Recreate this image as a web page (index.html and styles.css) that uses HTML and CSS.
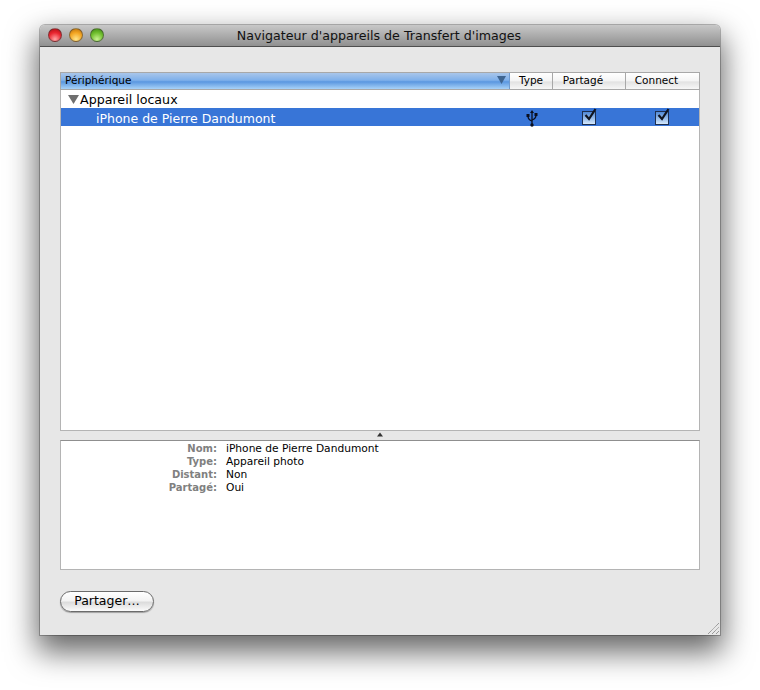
FILE: index.html
```html
<!DOCTYPE html>
<html lang="fr">
<head>
<meta charset="utf-8">
<title>Navigateur d'appareils de Transfert d'images</title>
<link rel="stylesheet" href="styles.css">
</head>
<body>
<div class="window">
  <header class="titlebar">
    <div class="lights">
      <span class="light red"></span>
      <span class="light yellow"></span>
      <span class="light green"></span>
    </div>
    <div class="title">Navigateur d'appareils de Transfert d'images</div>
  </header>
  <main class="content">
    <section class="table">
      <div class="thead">
        <div class="th th-device">
          <span>Périphérique</span>
          <svg class="sort" width="9" height="8" viewBox="0 0 9 8"><path d="M0 0h9L4.500 8z" fill="#3f6590"/></svg>
        </div>
        <div class="th col-type">Type</div>
        <div class="th col-shared">Partagé</div>
        <div class="th col-connect">Connect</div>
      </div>
      <div class="row group">
        <svg class="disclosure" width="11" height="9" viewBox="0 0 11 9"><path d="M0 0h11L5.500 9z" fill="#6f6f6f"/></svg>
        <span>Appareil locaux</span>
      </div>
      <div class="row selected">
        <span class="name">iPhone de Pierre Dandumont</span>
        <div class="cell col-type">
          <svg width="14" height="17" viewBox="0 0 14 17"><g fill="none" stroke="#0a0f1e" stroke-width="1.300"><path d="M7 2v13"/><path d="M7 11C3.500 10 3 8.500 3 6"/><path d="M7 10c3-1 4-2 4-5"/></g><path d="M7 0l2 3H5zM1.500 4h3v3h-3zM9.500 3h3v3h-3z" fill="#0a0f1e"/><circle cx="7" cy="15" r="1.700" fill="#0a0f1e"/></svg>
        </div>
        <div class="cell col-shared"><span class="check"><svg width="16" height="16" viewBox="0 0 16 16"><path d="M3.500 7l3.500 4L13.500 1" fill="none" stroke="#10141f" stroke-width="2.200"/></svg></span></div>
        <div class="cell col-connect"><span class="check"><svg width="16" height="16" viewBox="0 0 16 16"><path d="M3.500 7l3.500 4L13.500 1" fill="none" stroke="#10141f" stroke-width="2.200"/></svg></span></div>
      </div>
    </section>
    <div class="splitter"><svg width="6" height="5" viewBox="0 0 6 5"><path d="M0 4.500L3 .5 6 4.500z" fill="#333"/></svg></div>
    <section class="info">
      <div class="k">Nom:</div><div>iPhone de Pierre Dandumont</div>
      <div class="k">Type:</div><div>Appareil photo</div>
      <div class="k">Distant:</div><div>Non</div>
      <div class="k">Partagé:</div><div>Oui</div>
    </section>
    <div class="actions"><button class="btn" type="button">Partager…</button></div>
    <svg class="grip" width="12" height="12" viewBox="0 0 12 12"><path d="M1 12L12 1M5 12l7-7M9 12l3-3" stroke="#7a7a7a" stroke-width="1" stroke-dasharray="1 .6" fill="none"/></svg>
  </main>
</div>
</body>
</html>
```
FILE: styles.css
```css
* { box-sizing: border-box; }
html, body { margin: 0; height: 100%; background: #fff; }
body {
  width: 760px;
  height: 690px;
  padding: 25px 40px 55px 40px;
  overflow: hidden;
  font-family: "DejaVu Sans", sans-serif;
  color: #000;
}
.window {
  position: relative;
  width: 680px;
  height: 610px;
  display: flex;
  flex-direction: column;
  border-radius: 5px 5px 0 0;
  background: #e7e7e7;
  box-shadow: 0 14px 30px 3px rgba(0,0,0,.6), 0 0 0 1px rgba(0,0,0,.25);
}
.titlebar {
  position: relative;
  height: 22px;
  flex: none;
  border-radius: 5px 5px 0 0;
  background: linear-gradient(#c8c8c8, #909090);
  border-bottom: 1px solid #4e4e4e;
  display: flex;
  align-items: center;
  justify-content: center;
}
.lights { position: absolute; left: 8px; top: 3px; display: flex; gap: 7px; }
.light { width: 14px; height: 14px; border-radius: 50%; border: 1px solid rgba(60,60,60,.55); }
.red { background: radial-gradient(circle at 50% 85%, #ffa6a6, #ea2630 55%, #a80d12); }
.yellow { background: radial-gradient(circle at 50% 85%, #ffe58a, #f3a522 55%, #b86d0b); }
.green { background: radial-gradient(circle at 50% 85%, #c9f291, #70bf2e 55%, #3c8412); }
.title { font-size: 12.650px; color: #111; padding: 0 2px 1px 0; }
.content { position: relative; flex: 1; padding: 25px 20px 0 20px; display: flex; flex-direction: column; }
.table { height: 359px; flex: none; width: 640px; background: #fff; border: 1px solid #b4b4b4; border-top: 0; }
.thead { display: flex; height: 18px; font-size: 10.500px; margin: 0 -1px; border: 1px solid #a8a8a8; padding-bottom: 2px; background: linear-gradient(#fff 0%, #f4f4f4 50%, #e2e2e2 55%, #f7f7f7 100%); }
.th { display: flex; align-items: center; justify-content: center; border-right: 1px solid #a8a8a8; margin-bottom: -2px; padding-bottom: 2px; }
.th:last-child { border-right: 0; }
.th-device { width: 449px; justify-content: space-between; padding: 0 3px 2px 4px; background: linear-gradient(#a9c6ea 0%, #7fb0ea 45%, #5a97e0 55%, #a8d2f8 100%); border-right-color: #6f9bd0; }
.col-type { width: 43px; flex: none; }
.col-shared { width: 73px; flex: none; padding-right: 12px; }
.col-connect { width: 73px; flex: none; padding-right: 12px; }
.cell.col-shared, .cell.col-connect { padding-right: 2px; }
.row { height: 18px; display: flex; align-items: center; font-size: 12.650px; }
.group { padding-left: 7px; gap: 1px; }
.selected { background: #3875d7; color: #fff; padding: 2px 0 0 35px; font-size: 12.500px; }
.name { width: 414px; flex: none; }
.cell { display: flex; justify-content: center; align-items: center; height: 16px; }
.check { position: relative; width: 14px; height: 14px; border: 1px solid #1e2f50; background: linear-gradient(#4f88d6, #d5e8fb); display: block; }
.check svg { position: absolute; left: -1px; top: -4px; }
.splitter { height: 9px; flex: none; display: flex; justify-content: center; align-items: flex-start; padding: 1px 1px 0 0; }
.info {
  height: 130px;
  flex: none;
  width: 640px;
  background: #fff;
  border: 1px solid #b4b4b4;
  border-top-color: #8f8f8f;
  padding: 1px 0 0 0;
  display: grid;
  grid-template-columns: 156px 1fr;
  grid-auto-rows: 13px;
  column-gap: 9px;
  font-size: 10.650px;
  line-height: 13px;
}
.k { text-align: right; font-weight: 700; font-size: 10px; color: #808080; }
.actions { padding-top: 20px; }
.btn {
  width: 94px;
  height: 21px;
  padding: 0 0 1px 0;
  border-radius: 11px;
  border: 1px solid #6b6b6b;
  background: linear-gradient(#fff 0%, #f3f3f3 45%, #dcdcdc 55%, #fbfbfb 100%);
  box-shadow: 0 1px 1px rgba(0,0,0,.3);
  font-family: inherit;
  font-size: 12.500px;
  color: #000;
}
.grip { position: absolute; right: 1px; bottom: 1px; }
```
